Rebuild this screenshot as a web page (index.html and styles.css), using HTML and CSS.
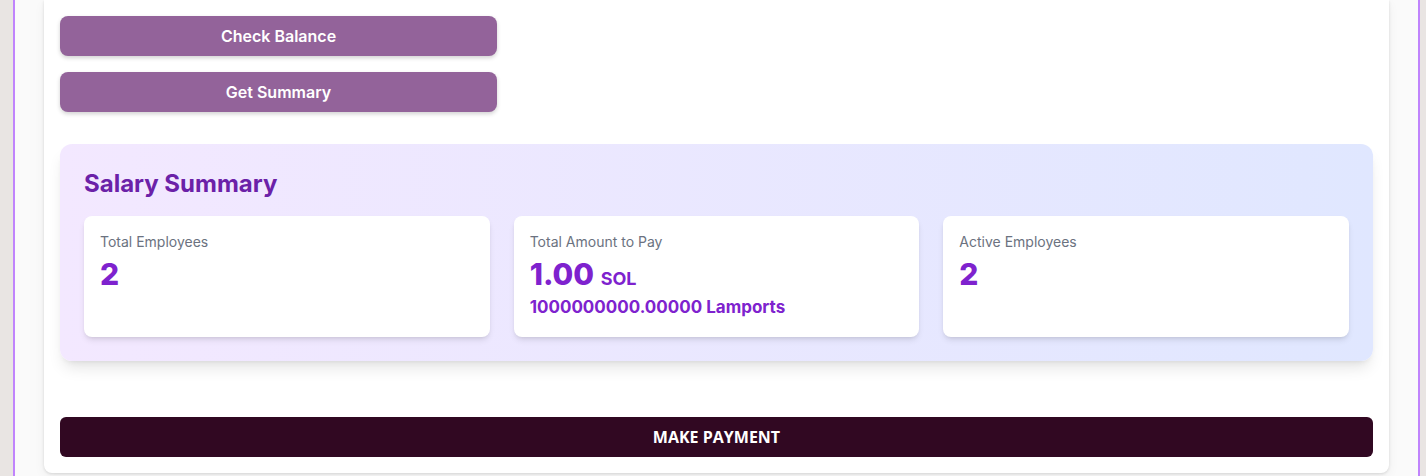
FILE: index.html
```html
<!DOCTYPE html>
<html lang="en">
<head>
<meta charset="utf-8">
<title>Payroll</title>
<link rel="stylesheet" href="styles.css">
</head>
<body>
<div class="frame">
  <main class="panel">
    <div class="actions">
      <button class="btn-soft">Check Balance</button>
      <button class="btn-soft">Get Summary</button>
    </div>
    <section class="summary">
      <h2 class="summary-title">Salary Summary</h2>
      <div class="stats">
        <div class="stat">
          <div class="stat-label">Total Employees</div>
          <div class="stat-value">2</div>
        </div>
        <div class="stat">
          <div class="stat-label">Total Amount to Pay</div>
          <div class="stat-value">1.00 <span class="unit">SOL</span></div>
          <div class="stat-sub">1000000000.00000 Lamports</div>
        </div>
        <div class="stat">
          <div class="stat-label">Active Employees</div>
          <div class="stat-value">2</div>
        </div>
      </div>
    </section>
    <button class="btn-pay">MAKE PAYMENT</button>
  </main>
</div>
</body>
</html>
```
FILE: styles.css
```css
* { box-sizing: border-box; }
html, body { margin: 0; padding: 0; }
body {
  background: #e9e5e3;
  font-family: Inter, "Noto Sans", sans-serif;
  height: 476px;
  overflow: hidden;
}
.frame {
  margin: 0 6px 0 13px;
  border-left: 2px solid #c084fc;
  border-right: 2px solid #c084fc;
  background: #fafafa;
  padding: 0 29px;
  min-height: 476px;
}
.panel {
  background: #ffffff;
  border-radius: 0 0 8px 8px;
  box-shadow: 0 1px 3px rgba(0,0,0,0.12), 0 4px 12px rgba(0,0,0,0.05);
  padding: 16px 16px 16px 16px;
  display: flex;
  flex-direction: column;
}
.actions {
  display: flex;
  flex-direction: column;
  gap: 16px;
}
.btn-soft {
  width: 437px;
  height: 40px;
  border: none;
  border-radius: 8px;
  background: #93639a;
  color: #ffffff;
  font-family: Inter, sans-serif;
  font-size: 16px;
  font-weight: 600;
  box-shadow: 0 2px 4px rgba(0,0,0,0.18);
  cursor: pointer;
}
.summary {
  margin-top: 32px;
  padding: 24px;
  border-radius: 12px;
  background: linear-gradient(to right, #f3e8ff, #e0e7ff);
  box-shadow: 0 10px 15px -3px rgba(0,0,0,0.1), 0 4px 6px -4px rgba(0,0,0,0.1);
}
.summary-title {
  margin: 0 0 16px 0;
  font-size: 24px;
  line-height: 32px;
  font-weight: 700;
  color: #6b21a8;
}
.stats {
  display: grid;
  grid-template-columns: repeat(3, 1fr);
  gap: 24px;
}
.stat {
  background: #ffffff;
  border-radius: 8px;
  padding: 16px;
  height: 121px;
  box-shadow: 0 4px 6px -1px rgba(0,0,0,0.1), 0 2px 4px -2px rgba(0,0,0,0.1);
}
.stat-label {
  font-size: 14px;
  line-height: 20px;
  color: #6b7280;
}
.stat-value {
  margin-top: 4px;
  height: 36px;
  font-size: 30px;
  line-height: 36px;
  font-weight: 800;
  color: #7e22ce;
}
.unit {
  font-size: 18px;
  line-height: 1;
  font-weight: 700;
}
.stat-sub {
  font-size: 17px;
  line-height: 30px;
  font-weight: 700;
  color: #7e22ce;
}
.btn-pay {
  margin-top: 56px;
  height: 40px;
  width: 100%;
  border: none;
  border-radius: 6px;
  background: #310822;
  color: #ffffff;
  font-family: "Open Sans", sans-serif;
  font-size: 16px;
  font-weight: 700;
  cursor: pointer;
}
```
